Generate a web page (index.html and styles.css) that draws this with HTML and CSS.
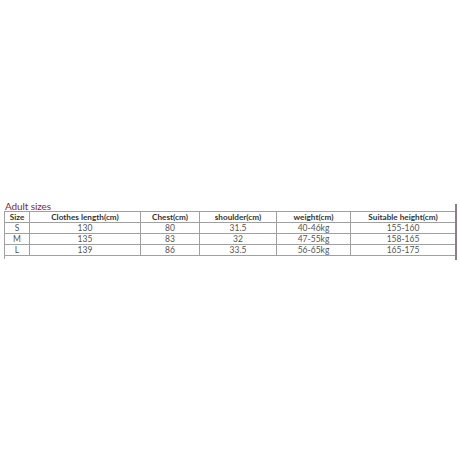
FILE: index.html
```html
<!DOCTYPE html>
<html>
<head>
<meta charset="utf-8">
<link rel="stylesheet" href="styles.css">
</head>
<body>
<div class="page">
  <div class="chart">
    <div class="main">
      <div class="title">Adult sizes</div>
      <table class="sizes">
        <colgroup>
          <col class="c1"><col class="c2"><col class="c3"><col class="c4"><col class="c5"><col class="c6">
        </colgroup>
        <thead>
          <tr><th>Size</th><th>Clothes length(cm)</th><th>Chest(cm)</th><th>shoulder(cm)</th><th>weight(cm)</th><th>Suitable height(cm)</th></tr>
        </thead>
        <tbody>
          <tr><td>S</td><td>130</td><td>80</td><td>31.5</td><td>40-46kg</td><td>155-160</td></tr>
          <tr><td>M</td><td>135</td><td>83</td><td>32</td><td>47-55kg</td><td>158-165</td></tr>
          <tr><td>L</td><td>139</td><td>86</td><td>33.5</td><td>56-65kg</td><td>165-175</td></tr>
        </tbody>
      </table>
      <div class="tail"></div>
    </div>
    <div class="edge"></div>
  </div>
</div>
</body>
</html>
```

FILE: styles.css
```css
html, body {
  margin: 0;
  padding: 0;
  background: #ffffff;
}
.page {
  width: 460px;
  height: 460px;
  padding-top: 201px;
  box-sizing: border-box;
  font-family: Lato, "Open Sans", sans-serif;
}
.chart {
  display: flex;
  align-items: flex-start;
  padding-left: 4px;
}
.main {
  display: flex;
  flex-direction: column;
}
.title {
  color: #8c2630;
  font-size: 10px;
  line-height: 10px;
  height: 10px;
  padding-left: 1px;
  letter-spacing: -0.1px;
}
.sizes {
  border-collapse: collapse;
  table-layout: fixed;
  width: 451px;
  font-size: 8.5px;
  color: #555555;
}
.sizes .c1 { width: 25px; }
.sizes .c2 { width: 111px; }
.sizes .c3 { width: 59px; }
.sizes .c4 { width: 77px; }
.sizes .c5 { width: 74px; }
.sizes .c6 { width: 105px; }
.sizes th, .sizes td {
  border: 1px solid #a0a0a0;
  text-align: center;
  vertical-align: middle;
  padding: 0;
  height: 10px;
  line-height: 10px;
  white-space: nowrap;
}
.sizes thead tr {
  border-top: 1px solid #707070;
}
.sizes th {
  font-weight: bold;
  color: #333333;
  font-size: 8.2px;
}
.tail {
  width: 1px;
  height: 3px;
  background: #a0a0a0;
}
.edge {
  width: 2px;
  height: 56px;
  margin-top: 3px;
  margin-left: -1px;
  background: #8a7d96;
}
```
